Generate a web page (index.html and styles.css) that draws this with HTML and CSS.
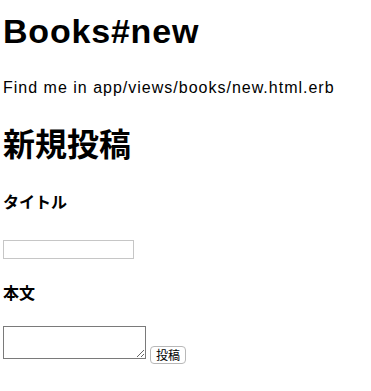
FILE: index.html
```html
<!DOCTYPE html>
<html lang="ja">
<head>
<meta charset="utf-8">
<title>Books#new</title>
<link rel="stylesheet" href="styles.css">
</head>
<body>
<h1 class="page-title">Books#new</h1>
<p class="intro">Find me in app/views/books/new.html.erb</p>
<h1 class="section-title">新規投稿</h1>
<form class="book-form">
  <div class="field-label">タイトル</div>
  <input class="title-input" type="text">
  <div class="field-label body-label">本文</div>
  <div class="body-row">
    <textarea class="body-input"></textarea>
    <button class="submit-btn" type="button">投稿</button>
  </div>
</form>
</body>
</html>
```

FILE: styles.css
```css
html, body {
  background: #fff;
}
body {
  margin: 0;
  padding: 0 0 0 3px;
  font-family: "Liberation Sans", "Noto Sans CJK JP", sans-serif;
  color: #000;
}
.page-title {
  font-size: 34px;
  font-weight: bold;
  line-height: 37px;
  margin: 13px 0 0;
  letter-spacing: 0.8px;
}
.intro {
  font-size: 16px;
  line-height: 18px;
  margin: 29px 0 0;
  letter-spacing: 1px;
}
.section-title {
  font-family: "Noto Sans CJK JP", sans-serif;
  font-size: 32px;
  font-weight: bold;
  line-height: 37px;
  margin: 27px 0 0;
}
.book-form {
  margin: 0;
}
.field-label {
  font-family: "Noto Sans CJK JP", sans-serif;
  font-size: 16px;
  font-weight: bold;
  line-height: 18px;
  margin: 31px 0 0;
}
.title-input {
  display: block;
  box-sizing: border-box;
  width: 131px;
  height: 19px;
  margin: 30px 0 0;
  padding: 0 2px;
  border: 1px solid #c6c6c6;
  background: #fff;
  outline: none;
}
.field-label.body-label {
  margin-top: 24px;
}
.body-row {
  display: flex;
  align-items: flex-start;
  gap: 4px;
  margin-top: 25px;
}
.body-input {
  box-sizing: border-box;
  width: 143px;
  height: 33px;
  margin: 0;
  padding: 2px;
  border: 1px solid #7a7a7a;
  background: #fff;
}
.submit-btn {
  box-sizing: border-box;
  width: 36px;
  height: 18px;
  margin-top: 20px;
  padding: 0;
  border: 1px solid #b8b8b8;
  border-radius: 4px;
  background: #fff;
  color: #000;
  font-family: "Noto Sans CJK JP", sans-serif;
  font-size: 12px;
  line-height: 16px;
}
```
